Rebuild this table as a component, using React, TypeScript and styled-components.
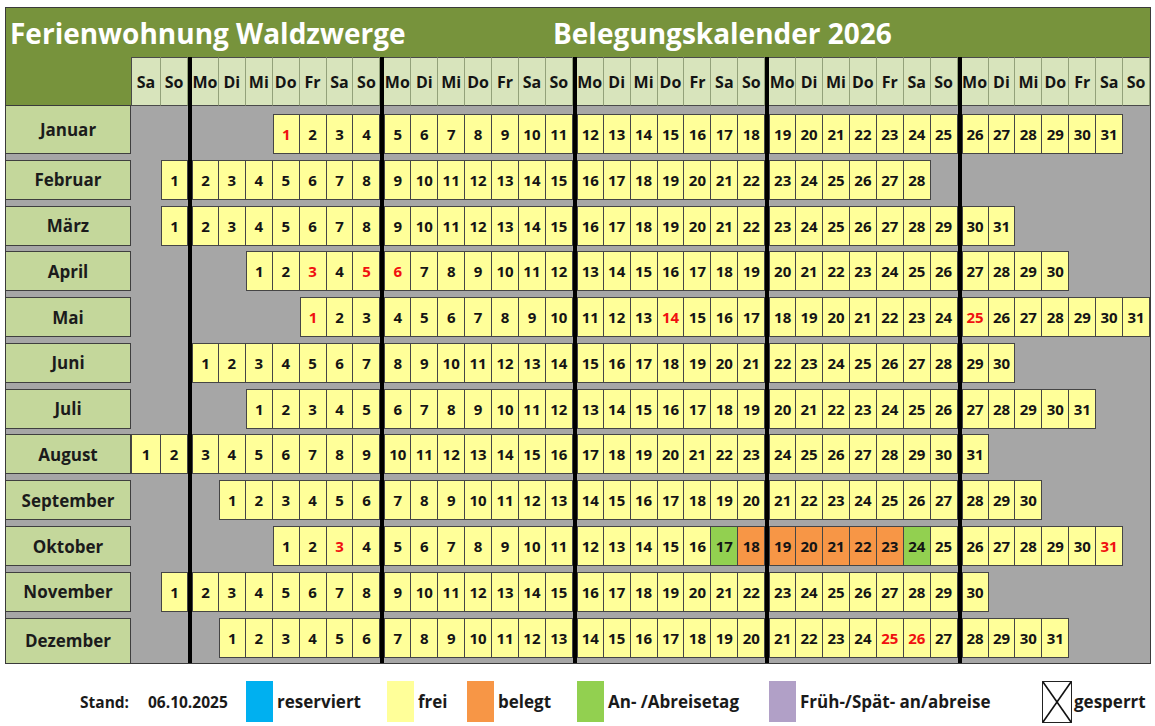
import React from 'react';
import styled, { createGlobalStyle } from 'styled-components';

const GlobalStyle = createGlobalStyle`
  html, body { margin: 0; padding: 0; background: #ffffff; }
  body { font-family: "Open Sans", "Liberation Sans", sans-serif; }
`;

const COLS = `125px 30px 27px 4px ${Array(5).fill('repeat(7, minmax(0, 1fr))').join(' 4px ')}`;
const BAR_COLS = [4, 12, 20, 28, 36];

const WEEK = ['Mo', 'Di', 'Mi', 'Do', 'Fr', 'Sa', 'So'];
const HEAD_DAYS = ['Sa', 'So', ...WEEK, ...WEEK, ...WEEK, ...WEEK, ...WEEK];

type Kind = 'free' | 'booked' | 'arrival';

interface Month {
  name: string;
  start: number;
  days: number;
  red?: number[];
  kinds?: Record<number, Kind>;
}

const MONTHS: Month[] = [
  { name: 'Januar', start: 5, days: 31, red: [1] },
  { name: 'Februar', start: 1, days: 28 },
  { name: 'März', start: 1, days: 31 },
  { name: 'April', start: 4, days: 30, red: [3, 5, 6] },
  { name: 'Mai', start: 6, days: 31, red: [1, 14, 25] },
  { name: 'Juni', start: 2, days: 30 },
  { name: 'Juli', start: 4, days: 31 },
  { name: 'August', start: 0, days: 31 },
  { name: 'September', start: 3, days: 30 },
  {
    name: 'Oktober',
    start: 5,
    days: 31,
    red: [3, 31],
    kinds: { 17: 'arrival', 18: 'booked', 19: 'booked', 20: 'booked', 21: 'booked', 22: 'booked', 23: 'booked', 24: 'arrival' },
  },
  { name: 'November', start: 1, days: 30 },
  { name: 'Dezember', start: 3, days: 31, red: [25, 26] },
];

const KIND_BG: Record<Kind, string> = {
  free: '#ffff99',
  booked: '#f79646',
  arrival: '#92d050',
};

// map day-column index (0..36) to grid column
const gridCol = (d: number) => {
  if (d < 2) return d + 2;
  const b = Math.floor((d - 2) / 7);
  const p = (d - 2) % 7;
  return 5 + b * 8 + p;
};

const startsRun = (d: number, first: boolean) => first || d === 2 || (d >= 2 && (d - 2) % 7 === 0);

const Page = styled.div`
  width: 1155px;
  height: 726px;
  overflow: hidden;
`;

const Frame = styled.div`
  margin: 7px 0 0 5px;
  width: 1146px;
  box-sizing: border-box;
  border: 1px solid #3a3a3a;
  background: #a6a6a6;
`;

const TitleBar = styled.div`
  height: 49px;
  background: #77933c;
  display: grid;
  grid-template-columns: 543px auto;
  align-items: center;
  padding-left: 4px;
  color: #ffffff;
  font-weight: 700;
  font-size: 28px;
  line-height: 1;
  white-space: nowrap;
`;

const GridRow = styled.div`
  display: grid;
  grid-template-columns: ${COLS};
  background: #a6a6a6;
`;

const HeaderRow = styled(GridRow)`
  height: 49px;
`;

const NameHead = styled.div`
  grid-column: 1;
  grid-row: 1;
  background: #77933c;
  border-bottom: 1px solid #3a3a3a;
`;

const DayHead = styled.div<{ $col: number; $first?: boolean }>`
  grid-column: ${(p) => p.$col};
  grid-row: 1;
  box-sizing: border-box;
  background: #d8e4bc;
  border-top: 1px solid #4a4a4a;
  border-bottom: 1px solid #4a4a4a;
  border-right: 1px solid #93a17a;
  border-left: ${(p) => (p.$first ? '1px solid #4a4a4a' : 'none')};
  display: flex;
  align-items: center;
  justify-content: center;
  font-weight: 700;
  font-size: 16px;
  color: #141414;
  white-space: nowrap;
  overflow: hidden;
`;

const Bar = styled.div<{ $col: number }>`
  grid-column: ${(p) => p.$col};
  grid-row: 1;
  background: #000000;
`;

const NameCell = styled.div<{ $mt: number; $mb: number; $noTop?: boolean; $noBottom?: boolean }>`
  grid-column: 1;
  grid-row: 1;
  margin-top: ${(p) => p.$mt}px;
  margin-bottom: ${(p) => p.$mb}px;
  box-sizing: border-box;
  background: #c4d79b;
  border-top: ${(p) => (p.$noTop ? 'none' : '1px solid #3f3f3f')};
  border-bottom: ${(p) => (p.$noBottom ? 'none' : '1px solid #3f3f3f')};
  border-right: 1px solid #3f3f3f;
  display: flex;
  align-items: center;
  justify-content: center;
  font-weight: 700;
  font-size: 17px;
  color: #1b1b1b;
`;

const DayCell = styled.div<{ $col: number; $mt: number; $mb: number; $kind: Kind; $red?: boolean; $left?: boolean }>`
  grid-column: ${(p) => p.$col};
  grid-row: 1;
  height: 40px;
  margin-top: ${(p) => p.$mt}px;
  margin-bottom: ${(p) => p.$mb}px;
  box-sizing: border-box;
  background: ${(p) => KIND_BG[p.$kind]};
  border-top: 1px solid #454545;
  border-bottom: 1px solid #454545;
  border-right: 1px solid #454545;
  border-left: ${(p) => (p.$left ? '1px solid #454545' : 'none')};
  display: flex;
  align-items: center;
  justify-content: center;
  font-weight: 700;
  font-size: 15px;
  color: ${(p) => (p.$red ? '#f01010' : '#141414')};
  white-space: nowrap;
`;

const Legend = styled.div`
  display: grid;
  grid-template-columns: 68px 98px 141px 80px 110px 192px 273px auto;
  align-items: center;
  padding-left: 80px;
  margin-top: 17px;
  color: #1a1a1a;
  font-weight: 700;
  white-space: nowrap;
`;

const LegendText = styled.span<{ $size: number }>`
  font-size: ${(p) => p.$size}px;
`;

const LegendItem = styled.div<{ $gap: number }>`
  display: flex;
  align-items: center;
  gap: ${(p) => p.$gap}px;
`;

const Swatch = styled.div<{ $color: string }>`
  width: 27px;
  height: 41px;
  background: ${(p) => p.$color};
`;

const LEGEND = [
  { color: '#00b0f0', label: 'reserviert' },
  { color: '#ffff99', label: 'frei' },
  { color: '#f79646', label: 'belegt' },
  { color: '#92d050', label: 'An- /Abreisetag' },
  { color: '#b1a0c7', label: 'Früh-/Spät- an/abreise' },
];

const CrossBox = () => (
  <svg width="30" height="42" viewBox="0 0 30 42">
    <rect x="0.5" y="0.5" width="29" height="41" fill="#ffffff" stroke="#222" strokeWidth="1" />
    <line x1="1" y1="1" x2="29" y2="41" stroke="#111" strokeWidth="1.6" />
    <line x1="29" y1="1" x2="1" y2="41" stroke="#111" strokeWidth="1.6" />
  </svg>
);

const Bars = () => (
  <>
    {BAR_COLS.map((c) => (
      <Bar key={c} $col={c} />
    ))}
  </>
);

const MonthRow: React.FC<{ m: Month; i: number; total: number }> = ({ m, i, total }) => {
  const isFirst = i === 0;
  const isLast = i === total - 1;
  const mt = isFirst ? 8 : 2.9;
  const mb = isLast ? 5 : 2.9;
  const cells = [];
  for (let day = 1; day <= m.days; day++) {
    const d = m.start + day - 1;
    cells.push(
      <DayCell
        key={day}
        $col={gridCol(d)}
        $mt={mt}
        $mb={mb}
        $kind={m.kinds?.[day] ?? 'free'}
        $red={m.red?.includes(day)}
        $left={startsRun(d, day === 1)}
      >
        {day}
      </DayCell>
    );
  }
  return (
    <GridRow>
      <NameCell $mt={isFirst ? 0 : mt} $mb={isLast ? 0 : mb} $noTop={isFirst} $noBottom={isLast}>
        {m.name}
      </NameCell>
      {cells}
      <Bars />
    </GridRow>
  );
};

export default function App() {
  return (
    <Page>
      <GlobalStyle />
      <Frame>
        <TitleBar>
          <span>Ferienwohnung Waldzwerge</span>
          <span>Belegungskalender 2026</span>
        </TitleBar>
        <HeaderRow>
          <NameHead />
          {HEAD_DAYS.map((d, idx) => (
            <DayHead key={idx} $col={gridCol(idx)} $first={idx === 0}>
              {d}
            </DayHead>
          ))}
          <Bars />
        </HeaderRow>
        {MONTHS.map((m, i) => (
          <MonthRow key={m.name} m={m} i={i} total={MONTHS.length} />
        ))}
      </Frame>
      <Legend>
        <LegendText $size={15.5}>Stand:</LegendText>
        <LegendText $size={15.5}>06.10.2025</LegendText>
        {LEGEND.map((l) => (
          <LegendItem key={l.label} $gap={4}>
            <Swatch $color={l.color} />
            <LegendText $size={17}>{l.label}</LegendText>
          </LegendItem>
        ))}
        <LegendItem $gap={2}>
          <CrossBox />
          <LegendText $size={17}>gesperrt</LegendText>
        </LegendItem>
      </Legend>
    </Page>
  );
}
